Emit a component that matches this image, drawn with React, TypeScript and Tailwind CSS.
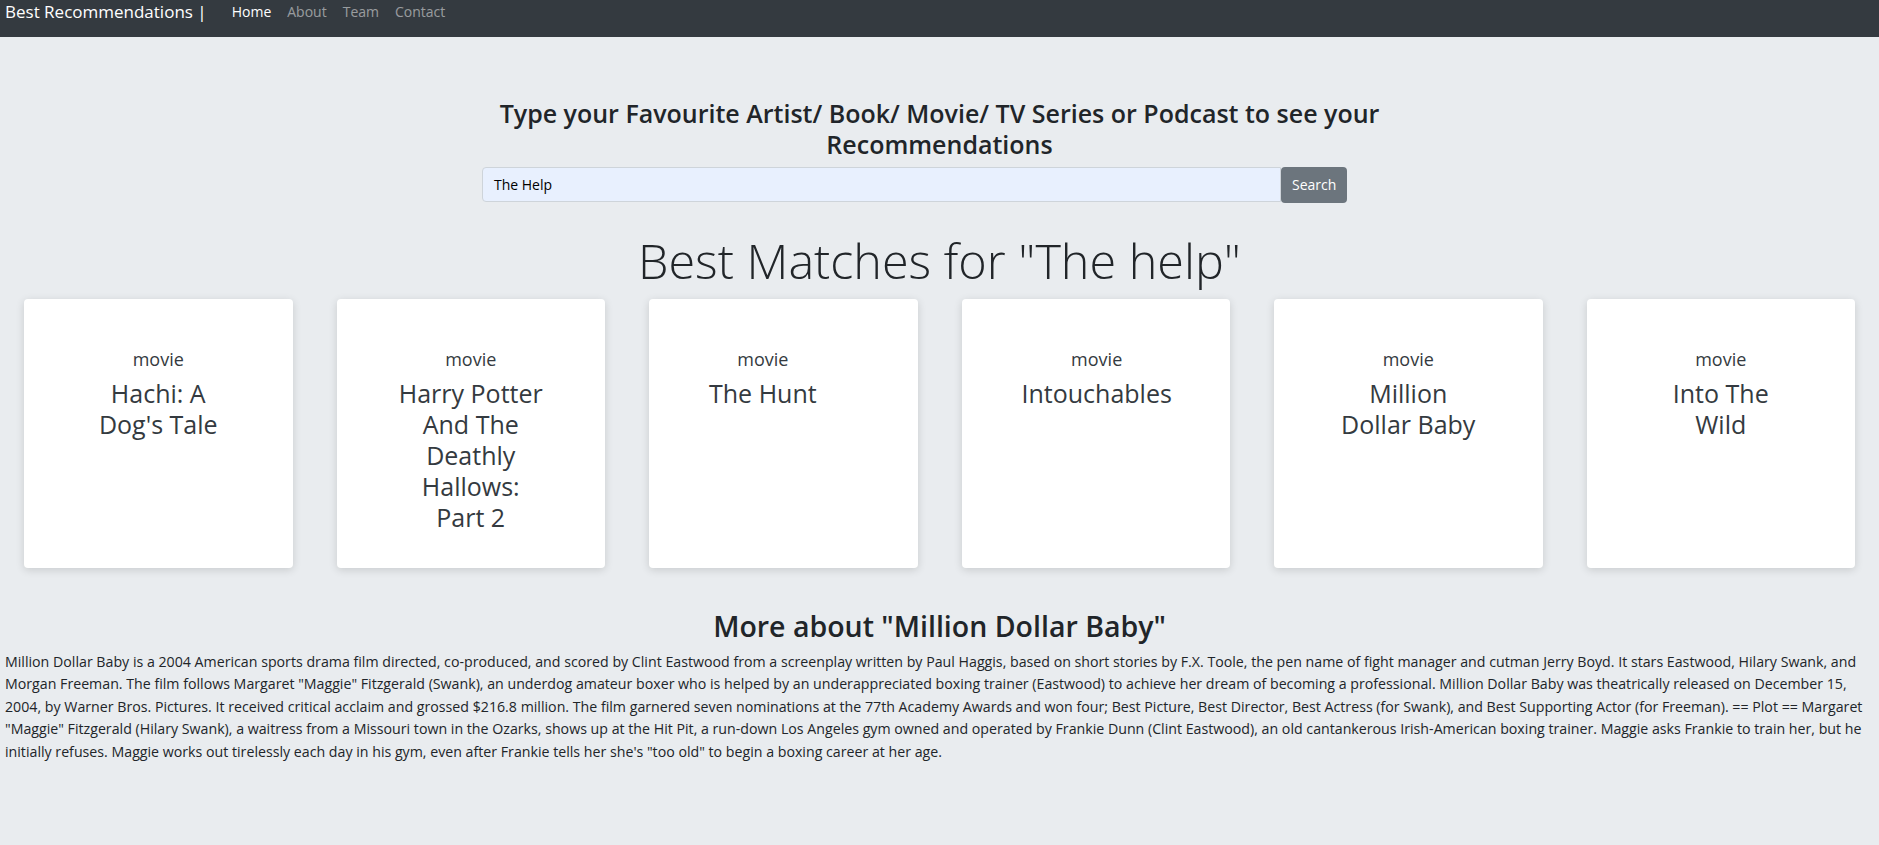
const movies = [
  "Hachi: A Dog's Tale",
  "Harry Potter And The Deathly Hallows: Part 2",
  "The Hunt",
  "Intouchables",
  "Million Dollar Baby",
  "Into The Wild",
];

const about =
  'Million Dollar Baby is a 2004 American sports drama film directed, co-produced, and scored by Clint Eastwood from a screenplay written by Paul Haggis, based on short stories by F.X. Toole, the pen name of fight manager and cutman Jerry Boyd. It stars Eastwood, Hilary Swank, and Morgan Freeman. The film follows Margaret "Maggie" Fitzgerald (Swank), an underdog amateur boxer who is helped by an underappreciated boxing trainer (Eastwood) to achieve her dream of becoming a professional. Million Dollar Baby was theatrically released on December 15, 2004, by Warner Bros. Pictures. It received critical acclaim and grossed $216.8 million. The film garnered seven nominations at the 77th Academy Awards and won four; Best Picture, Best Director, Best Actress (for Swank), and Best Supporting Actor (for Freeman). == Plot == Margaret "Maggie" Fitzgerald (Hilary Swank), a waitress from a Missouri town in the Ozarks, shows up at the Hit Pit, a run-down Los Angeles gym owned and operated by Frankie Dunn (Clint Eastwood), an old cantankerous Irish-American boxing trainer. Maggie asks Frankie to train her, but he initially refuses. Maggie works out tirelessly each day in his gym, even after Frankie tells her she\'s "too old" to begin a boxing career at her age.';

function MovieCard({ title }: { title: string }) {
  return (
    <div className="h-[269px] bg-white rounded-[4px] shadow-[0_2px_8px_rgba(0,0,0,0.14)] px-[60px] pt-[49px] flex flex-col items-start">
      <div className="text-center text-[#343a40]">
        <div className="text-[18px] leading-[22px] mb-[8px]">movie</div>
        <div className="text-[25px] leading-[31px] font-medium">{title}</div>
      </div>
    </div>
  );
}

export default function App() {
  return (
    <div className="min-h-screen bg-[#e9ecef] text-[#212529] font-['Open_Sans',sans-serif] pb-[60px]">
      {/* Navbar */}
      <nav className="h-[37px] bg-[#343a40] px-[5px] flex items-start">
        <span className="text-[17px] leading-[24px] text-white">Best Recommendations |</span>
        <div className="flex gap-[16px] ml-[25px] text-[14px] leading-[24px]">
          <a className="text-white">Home</a>
          <a className="text-white/50">About</a>
          <a className="text-white/50">Team</a>
          <a className="text-white/50">Contact</a>
        </div>
      </nav>

      {/* Search */}
      <h3 className="mt-[61px] text-center text-[25px] leading-[31px] font-semibold">
        Type your Favourite Artist/ Book/ Movie/ TV Series or Podcast to see your
        <br />
        Recommendations
      </h3>
      <div className="flex ml-[482px] mt-[7px]">
        <div className="w-[799px] h-[35px] bg-[#e8f0fe] border border-[#ced4da] rounded-l-[4px] px-[11px] flex items-center text-[14px] text-black">
          The Help
        </div>
        <button className="h-[36px] -mt-[0.5px] px-[11px] bg-[#6c757d] text-white text-[14px] rounded-[4px]">
          Search
        </button>
      </div>

      <h1 className="mt-[26px] text-center text-[48.5px] leading-[62px] font-light">
        Best Matches for "The help"
      </h1>

      {/* Cards */}
      <div className="grid grid-cols-6 gap-[44px] px-[24px] mt-[8px]">
        {movies.map(m => (
          <MovieCard key={m} title={m} />
        ))}
      </div>

      {/* About */}
      <h2 className="mt-[41px] text-center text-[28.5px] leading-[34px] font-semibold">
        More about "Million Dollar Baby"
      </h2>
      <p className="mt-[8px] px-[5px] text-[14.2px] leading-[22.5px]">{about}</p>
    </div>
  );
}
